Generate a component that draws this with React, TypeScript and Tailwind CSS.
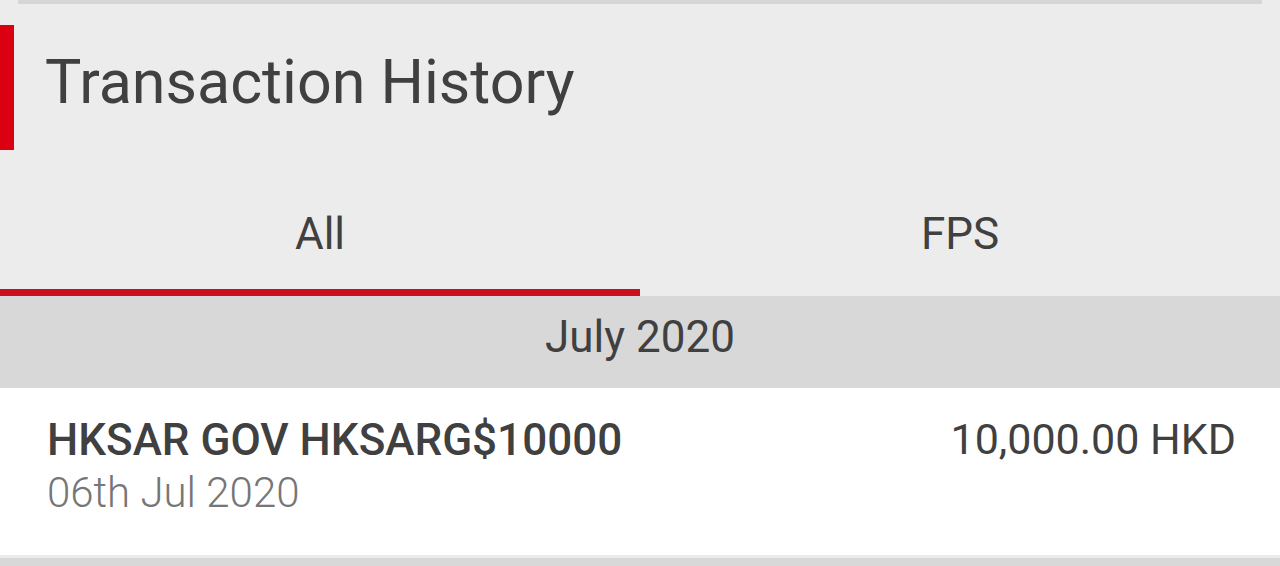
import React from 'react';

const font = { fontFamily: 'Roboto, "Liberation Sans", sans-serif' };

const App: React.FC = () => {
  return (
    <div className="h-[566px] w-[1280px] overflow-hidden bg-[#ececec] text-[#404040]" style={font}>
      {/* card edge above */}
      <div className="mx-[18px] h-[4px] bg-[#d6d6d6]" />

      {/* Title */}
      <div className="mt-[21px] flex h-[125px] items-center">
        <div className="h-full w-[14px] bg-[#db0011]" />
        <h1 className="ml-[31px] -mt-[10px] text-[61px] leading-none">Transaction History</h1>
      </div>

      {/* Tabs */}
      <div className="mt-[45px] flex">
        <div className="flex-1">
          <div className="flex h-[94px] items-start justify-center pt-[17px] text-[44px] leading-none">All</div>
          <div className="h-[7px] bg-[#cc0f1f]" />
        </div>
        <div className="flex-1">
          <div className="flex h-[94px] items-start justify-center pt-[17px] text-[44px] leading-none">FPS</div>
          <div className="h-[7px]" />
        </div>
      </div>

      {/* Month header */}
      <div className="flex h-[92px] items-center justify-center bg-[#d8d8d8] pb-[10px] text-[44px] leading-none">
        July 2020
      </div>

      {/* Row */}
      <div className="flex h-[167px] justify-between bg-white pl-[47px] pr-[44px] pt-[30px]">
        <div>
          <div className="text-[44px] font-medium leading-none">HKSAR GOV HKSARG$10000</div>
          <div className="mt-[10px] text-[42px] font-light leading-none text-[#767676]">06th Jul 2020</div>
        </div>
        <div className="text-[43px] leading-none">10,000.00 HKD</div>
      </div>
      <div className="h-[3px] bg-[#ebebeb]" />
      <div className="h-[8px] bg-[#d8d8d8]" />
    </div>
  );
};

export default App;
